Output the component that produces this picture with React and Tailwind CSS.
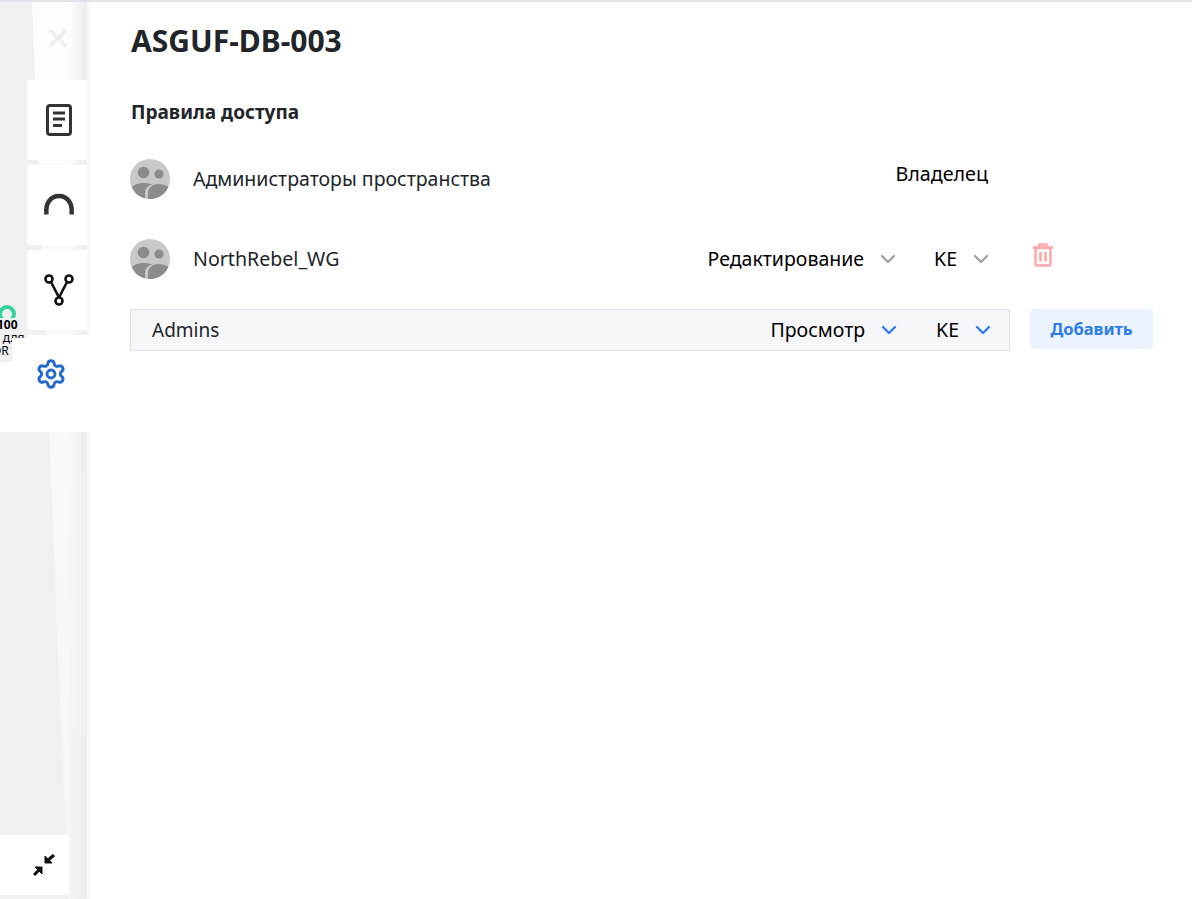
import { ChevronDown, Settings, X } from "lucide-react";

const font = { fontFamily: '"Noto Sans", sans-serif' };

function GroupAvatar() {
  return (
    <svg width="40" height="40" viewBox="0 0 40 40" className="shrink-0">
      <defs>
        <clipPath id="avatar-clip">
          <circle cx="20" cy="20" r="20" />
        </clipPath>
      </defs>
      <g clipPath="url(#avatar-clip)">
        <rect width="40" height="40" fill="#c8c8c8" />
        <circle cx="13.500" cy="13.500" r="5.800" fill="#8c8c8c" />
        <circle cx="29" cy="15" r="4.600" fill="#8c8c8c" />
        <path d="M0 40V30C3 26 8 24 14 24c3 0 6 .5 8 1.500-4 1-7 4-7 8V40z" fill="#8c8c8c" />
        <path d="M18 40v-6c0-5 4-9 10-9 5 0 9 1.500 12 4v11z" fill="#8c8c8c" />
      </g>
    </svg>
  );
}

function DocIcon() {
  return (
    <svg width="26" height="32" viewBox="0 0 26 32" fill="none" stroke="#333" strokeWidth="3">
      <rect x="1.500" y="1.500" width="23" height="29" rx="2.500" />
      <path d="M7 9h12M7 15h12M7 21.500h9" />
    </svg>
  );
}

function ArcIcon() {
  return (
    <svg width="32" height="24" viewBox="0 0 32 24" fill="none" stroke="#333" strokeWidth="4.500">
      <path d="M3.500 21.500C2 10 8 3 16 3s14 7 12.500 18.500" />
    </svg>
  );
}

function ForkIcon() {
  return (
    <svg width="30" height="32" viewBox="0 0 30 32" fill="none" stroke="#111" strokeWidth="2.600">
      <circle cx="5" cy="5" r="3.500" />
      <circle cx="25" cy="5" r="3.500" />
      <circle cx="15" cy="27" r="3.500" />
      <path d="M7 8l8 15.500M23 8L15 23.500" />
    </svg>
  );
}

function CollapseIcon() {
  return (
    <svg width="24" height="24" viewBox="0 0 24 24" fill="#111" stroke="#111">
      <path d="M13 10V3l7 7z" strokeWidth="1" />
      <path d="M15 8l7-6" strokeWidth="3" />
      <path d="M10 14v7l-7-7z" strokeWidth="1" />
      <path d="M8 16l-6 6" strokeWidth="3" />
    </svg>
  );
}

function TrashIcon() {
  return (
    <svg width="20" height="24" viewBox="0 0 20 24" fill="none" stroke="#ffa6a6" strokeWidth="2.400" className="mb-[8px] ml-[40px] mr-[100px]">
      <path d="M0 4.500h20M6.500 4V1.500h7V4" />
      <rect x="2.500" y="5" width="15" height="17.500" rx="1.500" />
      <path d="M7.500 9v9.500M12.500 9v9.500" strokeWidth="2.600" />
    </svg>
  );
}

function Tab({ children }) {
  return (
    <div className="ml-[27px] flex h-[80px] items-center justify-center rounded-l bg-white pl-[4px]">
      {children}
    </div>
  );
}

function Select({ label, blue, className }) {
  return (
    <div className={`flex items-center ${className || ""}`}>
      <span className="text-[19.500px] leading-none text-black">{label}</span>
      <ChevronDown
        size={24}
        strokeWidth={2.300}
        className={`ml-[12px] ${blue ? "text-[#2b7de9]" : "text-[#a0a0a0]"}`}
      />
    </div>
  );
}

export default function App() {
  return (
    <div className="flex h-[899px] w-[1192px] flex-col overflow-hidden bg-white" style={font}>
      <div className="h-[2px] shrink-0 bg-[#e2e2e8]" />
      <div className="flex min-h-0 flex-1">
        {/* Left rail over the map */}
        <aside className="relative flex w-[90px] shrink-0 flex-col border-r-[3px] border-[#f8f8f8] bg-[#f0f0f0]">
          <div className="absolute inset-0 bg-gradient-to-b from-[#fdfdfd] to-[#f4f4f4] [clip-path:polygon(32px_0,100%_0,100%_100%,68px_100%)]" />
          <div className="absolute inset-y-0 right-0 w-[18px] bg-gradient-to-r from-transparent to-[#ededed]" />
          <div className="absolute left-0 top-[303px] w-[27px] overflow-hidden text-[12px] leading-[13px] text-black">
            <div className="ml-[-2px] mb-[-5px] h-[18px] w-[18px] rounded-full border-[4px] border-[#34d399]" />
            <div className="relative ml-[-3px] bg-[#f0f0f0] font-bold">100</div>
            <div className="relative ml-[-7px] whitespace-nowrap bg-[#f0f0f0]">E для</div>
            <div className="relative ml-[-8px] bg-[#f0f0f0]">OR</div>
          </div>
          <div className="relative flex h-[78px] items-center justify-end pr-[15px]">
            <X size={28} strokeWidth={3} className="mb-[6px] text-[#eeeeee]" />
          </div>
          <div className="relative flex flex-col gap-[5px]">
            <Tab><DocIcon /></Tab>
            <Tab><ArcIcon /></Tab>
            <Tab><ForkIcon /></Tab>
            <div className="mr-[-3px] flex h-[97px] items-start bg-white pl-[35px] pt-[23px] [clip-path:polygon(27px_0,100%_0,100%_100%,0_100%,0_27px,12px_27px,12px_3px,27px_3px)]">
              <Settings size={32} strokeWidth={2.200} className="text-[#2268d1]" />
            </div>
          </div>
          <div className="relative mt-auto mb-[4px] flex h-[60px] w-[69px] items-center justify-end rounded-r bg-white pr-[13px]">
            <CollapseIcon />
          </div>
        </aside>

        {/* Access rules panel */}
        <main className="flex min-w-0 flex-1 flex-col pl-[40px] pr-[39px] pt-[19px]">
          <h1 className="ml-px text-[30px] font-bold leading-[40px] text-[#212529]">ASGUF-DB-003</h1>
          <h2 className="ml-px mt-[39px] text-[19px] font-bold leading-[24px] text-[#212529]">Правила доступа</h2>

          <div className="mt-[35px] flex h-[40px] items-center">
            <GroupAvatar />
            <span className="ml-[23px] text-[19.500px] text-[#212529]">Администраторы пространства</span>
            <span className="ml-auto mr-[165px] mb-[10px] text-[19.700px] leading-none text-black">Владелец</span>
          </div>

          <div className="mt-[40px] flex h-[40px] items-center">
            <GroupAvatar />
            <span className="ml-[23px] text-[19.600px] text-[#212529]">NorthRebel_WG</span>
            <div className="ml-auto flex items-center">
              <Select label="Редактирование" />
              <Select label="KE" className="ml-[34px]" />
              <TrashIcon />
            </div>
          </div>

          <div className="mt-[30px] flex items-start gap-[20px]">
            <div className="flex h-[42px] flex-1 items-center rounded-[2px] border border-[#e0e0e0] bg-[#f6f7fa] pl-[21px] pr-[14px]">
              <span className="flex-1 text-[19px] text-[#212529]">Admins</span>
              <Select label="Просмотр" blue />
              <Select label="KE" blue className="ml-[35px]" />
            </div>
            <button className="flex h-[40px] w-[123px] items-center justify-center rounded-[3px] bg-[#ebf3fe] text-[16.500px] font-bold text-[#2b7de9]">
              Добавить
            </button>
          </div>
        </main>
      </div>
    </div>
  );
}
